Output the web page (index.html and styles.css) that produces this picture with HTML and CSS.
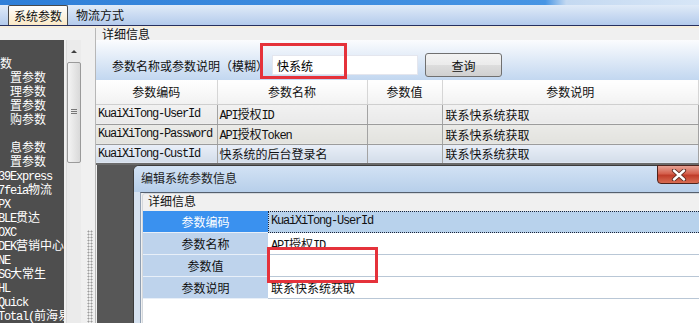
FILE: index.html
```html
<!DOCTYPE html>
<html lang="zh-CN">
<head>
    <meta charset="UTF-8">
    <title>系统参数</title>
    <link rel="stylesheet" href="styles.css">
</head>
<body>
<div class="app">
  <div class="caption"></div>
  <div class="tabs">
    <span class="tab active">系统参数</span>
    <span class="tab">物流方式</span>
  </div>
  <div class="tabline"></div>

  <div class="workspace">
    <aside class="side">
      <div class="side-top"></div>
      <div class="side-body">
        <ul class="tree">
          <li>数</li>
          <li class="sub">置参数</li>
          <li class="sub">理参数</li>
          <li class="sub">置参数</li>
          <li class="sub">购参数</li>
          <li>&nbsp;</li>
          <li class="sub">息参数</li>
          <li class="sub">置参数</li>
          <li class="cut"><span class="en">39Express</span></li>
          <li class="cut"><span class="en">7feia</span>物流</li>
          <li class="cut"><span class="en">PX</span></li>
          <li class="cut"><span class="en">BLE</span>贯达</li>
          <li class="cut"><span class="en">OXC</span></li>
          <li class="cut"><span class="en">DEK</span>营销中心</li>
          <li class="cut"><span class="en">NE</span></li>
          <li class="cut"><span class="en">SG</span>大常生</li>
          <li class="cut"><span class="en">HL</span></li>
          <li class="cut"><span class="en">Quick</span></li>
          <li class="cut"><span class="en">Total(</span>前海易</li>
        </ul>
        <div class="vscroll">
          <span class="arrow"></span>
          <span class="thumb"><i></i></span>
        </div>
        <div class="splitter"><span class="grip"></span></div>
      </div>
    </aside>

    <main class="main">
      <div class="group-label">详细信息</div>
      <div class="search">
        <label for="kw">参数名称或参数说明（模糊）</label>
        <input id="kw" class="search-input" type="text" value="快系统">
        <button class="btn">查询</button>
        <span class="mark mark-search"></span>
      </div>
      <table class="grid">
        <colgroup>
          <col class="c1"><col class="c2"><col class="c3"><col>
        </colgroup>
        <thead>
          <tr><th>参数编码</th><th>参数名称</th><th>参数值</th><th>参数说明</th></tr>
        </thead>
        <tbody>
          <tr class="r1">
            <td class="en">KuaiXiTong-UserId</td>
            <td><span class="en">API</span>授权<span class="en">ID</span></td>
            <td></td>
            <td>联系快系统获取</td>
          </tr>
          <tr class="r2">
            <td class="en">KuaiXiTong-Password</td>
            <td><span class="en">API</span>授权<span class="en">Token</span></td>
            <td></td>
            <td>联系快系统获取</td>
          </tr>
          <tr class="r3">
            <td class="en">KuaiXiTong-CustId</td>
            <td>快系统的后台登录名</td>
            <td></td>
            <td>联系快系统获取</td>
          </tr>
        </tbody>
      </table>
      <div class="grid-empty"></div>
    </main>
  </div>

  <div class="dialog">
    <div class="dlg-title">编辑系统参数信息</div>
    <span class="dlg-close">
      <svg width="16" height="12" viewBox="0 0 16 12">
        <path d="M3 1.5 L13 10.5 M13 1.5 L3 10.5" stroke="#5a2a22" stroke-width="4.2" stroke-linecap="round"/>
        <path d="M3 1.5 L13 10.5 M13 1.5 L3 10.5" stroke="#ffffff" stroke-width="2.4" stroke-linecap="round"/>
      </svg>
    </span>
    <div class="dlg-frame">
      <div class="dlg-client">
        <div class="dlg-group">
          <div class="dlg-group-label">详细信息</div>
          <div class="props">
            <div class="pk sel">参数编码</div>
            <div class="pv sel en">KuaiXiTong-UserId</div>
            <div class="pk">参数名称</div>
            <div class="pv"><span class="en">API</span>授权<span class="en">ID</span></div>
            <div class="pk">参数值</div>
            <div class="pv"></div>
            <div class="pk">参数说明</div>
            <div class="pv">联系快系统获取</div>
            <div class="props-rest"></div>
          </div>
        </div>
      </div>
    </div>
    <span class="mark mark-value"></span>
  </div>
</div>
</body>
</html>
```

FILE: styles.css
```css
* {
    box-sizing: border-box;
}

body {
    margin: 0;
    font-family: "Noto Sans CJK SC", "Liberation Sans", sans-serif;
    font-size: 12px;
    color: #111;
    background: #f0f0f0;
}

.en {
    font-family: "Liberation Mono", "Noto Sans CJK SC", monospace;
    letter-spacing: -1.2px;
}

.app {
    position: relative;
    width: 699px;
    height: 323px;
    overflow: hidden;
    display: flex;
    flex-direction: column;
}

/* top window strip + tabs */
.caption {
    height: 5px;
    background: linear-gradient(to right, #2f7fd8 0, #4795e4 78%, #c4d9f1 81%, #d7e6f7 100%);
}

.tabs {
    height: 21px;
    display: flex;
    align-items: flex-end;
    gap: 7px;
    padding-left: 8px;
    background: linear-gradient(#e0ebf8, #b4cbec);
    border-bottom: 1px solid #27305f;
}

.tab {
    height: 20px;
    line-height: 19px;
    padding: 0 1px;
}

.tab.active {
    width: 60px;
    text-align: center;
    border: 1px solid #4a4a4a;
    border-bottom: none;
    border-radius: 2px 2px 0 0;
    background: linear-gradient(#fefefe, #fbe9c6);
}

.tabline {
    height: 2px;
    background: #f6eedc;
}

.workspace {
    flex: 1;
    display: flex;
    min-height: 0;
}

/* left tree */
.side {
    width: 95px;
    display: flex;
    flex-direction: column;
}

.side-top {
    height: 12px;
}

.side-body {
    flex: 1;
    display: flex;
}

.tree {
    width: 64px;
    margin: 0 2px 0 0;
    padding: 16px 0 0;
    list-style: none;
    background: #4e4e4e;
    color: #fff;
    overflow: hidden;
    white-space: nowrap;
}

.tree li {
    height: 14px;
    line-height: 14px;
}

.tree .sub {
    padding-left: 10px;
}

.tree .cut {
    margin-left: -2px;
}

.vscroll {
    position: relative;
    width: 15px;
    background: #ebebeb;
    border-left: 1px solid #dcdcdc;
}

.vscroll .arrow {
    position: absolute;
    left: 4px;
    top: 10px;
    border: 3px solid transparent;
    border-bottom: 3px solid #404040;
    border-top: none;
}

.vscroll .thumb {
    position: absolute;
    left: 0;
    top: 22px;
    width: 14px;
    height: 101px;
    border: 1px solid #9a9a9a;
    border-radius: 2px;
    background: linear-gradient(to right, #f4f4f4, #d9d9d9);
}

.vscroll .thumb i {
    position: absolute;
    left: 3px;
    top: 46px;
    width: 6px;
    height: 5px;
    border-top: 1px solid #777;
    border-bottom: 1px solid #777;
}

.vscroll .thumb i::after {
    content: "";
    position: absolute;
    left: 0;
    top: 1px;
    width: 6px;
    border-top: 1px solid #777;
}

.splitter {
    position: relative;
    flex: 1;
}

.splitter .grip {
    position: absolute;
    left: 6px;
    top: 190px;
    bottom: 0;
    width: 6px;
    background: radial-gradient(circle, #9c9c9c 0.8px, transparent 1.2px) 0 0 / 3px 3px;
}

/* main panel */
.main {
    flex: 1;
    display: flex;
    flex-direction: column;
    border-left: 1px solid #b7b7b7;
}

.group-label {
    height: 12px;
    line-height: 11px;
    padding-left: 6px;
}

.search {
    position: relative;
    height: 40px;
    display: flex;
    align-items: center;
    padding: 10px 0 0 16px;
    background: linear-gradient(#fbfcfe, #c2d7f0);
}

.search-input {
    width: 146px;
    height: 20px;
    margin-left: 4px;
    padding: 0 4px;
    border: 1px solid #e4e6ee;
    font: inherit;
    background: #fff;
}

.btn {
    width: 77px;
    height: 24px;
    margin-left: 7px;
    padding: 0;
    border: 1px solid #707070;
    border-radius: 3px;
    font: inherit;
    color: #111;
    background: linear-gradient(#f3f3f3 0, #ebebeb 50%, #dddddd 51%, #d0d0d0 100%);
}

.mark {
    position: absolute;
    border: 3px solid #e5323b;
}

.mark-search {
    left: 164px;
    top: 3px;
    width: 87px;
    height: 36px;
}

.grid {
    width: 603px;
    border-collapse: collapse;
    table-layout: fixed;
}

.grid .c1 { width: 121px; }
.grid .c2 { width: 150px; }
.grid .c3 { width: 75px; }

.grid th {
    height: 24px;
    font-weight: normal;
    background: linear-gradient(#ffffff, #f2f2f2);
    border-right: 1px solid #d6d6d6;
    border-bottom: 1px solid #cfcfcf;
}

.grid td {
    height: 20px;
    padding: 0 2px;
    white-space: nowrap;
    overflow: hidden;
    border-right: 1px solid #a3a3a3;
    border-bottom: 1px solid #9c9c9c;
}

.grid td:last-child {
    padding-left: 3px;
}

.grid .r1 td { background: linear-gradient(#f2f2f2, #e9e9e9); }
.grid .r2 td { background: linear-gradient(#ebebe8, #e2e2de); }
.grid .r3 td {
    background: linear-gradient(#e9eff8, #d3dde9);
    border-bottom: 2px solid #6a6a6a;
}

.grid-empty {
    flex: 1;
    margin-left: 1px;
    background: #575757;
}

/* dialog */
.dialog {
    position: absolute;
    left: 133px;
    top: 165px;
    width: 600px;
    height: 170px;
    display: flex;
    flex-direction: column;
    border: 1px solid #3b3b3b;
    border-radius: 6px 6px 0 0;
    background: #d6e2f0;
}

.dlg-title {
    height: 26px;
    line-height: 24px;
    padding-left: 7px;
    color: #1e1e1e;
    border-radius: 5px 5px 0 0;
    background: linear-gradient(#d2e2f4, #b7cfea);
}

.dlg-close {
    position: absolute;
    left: 523px;
    top: -1px;
    width: 44px;
    height: 19px;
    display: flex;
    align-items: center;
    justify-content: center;
    border: 1px solid #4e231c;
    border-radius: 0 0 4px 4px;
    background: linear-gradient(#e6a294 0, #d5604d 45%, #c03d2a 55%, #d86c52 100%);
}

.dlg-frame {
    flex: 1;
    display: flex;
    padding-left: 6px;
}

.dlg-client {
    flex: 1;
    display: flex;
    background: #f0f0f0;
    border-left: 1px solid #8f9fb3;
    border-top: 1px solid #55606e;
}

.dlg-group {
    flex: 1;
    display: flex;
    flex-direction: column;
    margin-left: 1px;
    border: 1px solid #d4d8dc;
    border-radius: 3px;
}

.dlg-group-label {
    height: 17px;
    line-height: 14px;
    padding-left: 5px;
}

.props {
    flex: 1;
    display: grid;
    grid-template-columns: 125px 1fr;
    grid-auto-rows: 22px;
    background: #fff;
}

.pk {
    line-height: 21px;
    text-align: center;
    background: #bed3ec;
    border-bottom: 1px solid #e8eff8;
}

.pk.sel {
    color: #fff;
    background: #3a91ef;
}

.pv {
    line-height: 21px;
    padding-left: 3px;
    white-space: nowrap;
    border-bottom: 1px solid #b9c7d6;
}

.pv.sel {
    background: #b8d2ec;
    border: 1px dotted #1b2438;
    padding-left: 2px;
    line-height: 19px;
}

.props-rest {
    grid-column: 1 / 3;
}

.mark-value {
    left: 133px;
    top: 81px;
    width: 111px;
    height: 36px;
}
```
